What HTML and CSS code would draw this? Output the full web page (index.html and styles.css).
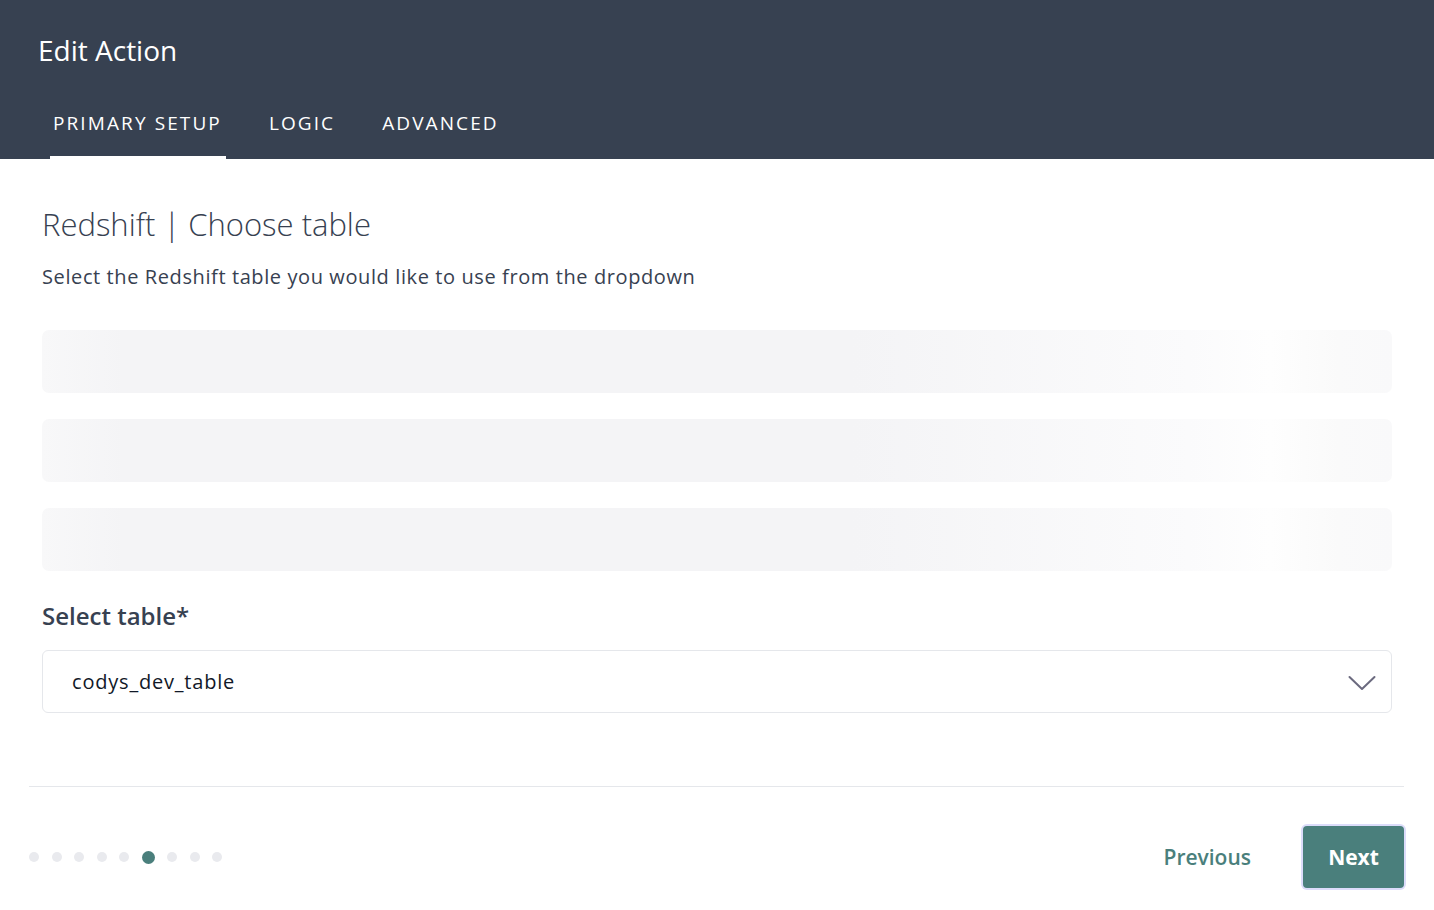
FILE: index.html
```html
<!DOCTYPE html>
<html>
<head>
<meta charset="utf-8">
<link rel="stylesheet" href="styles.css">
</head>
<body>
<div class="page">
  <header class="header">
    <h1 class="title">Edit Action</h1>
    <nav class="tabs">
      <div class="tab active">PRIMARY SETUP</div>
      <div class="tab">LOGIC</div>
      <div class="tab">ADVANCED</div>
    </nav>
  </header>
  <main class="content">
    <h2 class="heading">Redshift | Choose table</h2>
    <p class="sub">Select the Redshift table you would like to use from the dropdown</p>
    <div class="skeletons">
      <div class="skel"></div>
      <div class="skel"></div>
      <div class="skel"></div>
    </div>
    <label class="label">Select table*</label>
    <div class="select">
      <span class="value">codys_dev_table</span>
      <svg class="chev" width="28" height="16" viewBox="0 0 28 16"><path d="M1.5 2 L14 14 L26.5 2" fill="none" stroke="#6b6a7f" stroke-width="2" stroke-linecap="round" stroke-linejoin="round"/></svg>
    </div>
  </main>
  <footer class="footer">
    <div class="dots">
      <span class="dot"></span><span class="dot"></span><span class="dot"></span><span class="dot"></span><span class="dot"></span><span class="dot active"></span><span class="dot"></span><span class="dot"></span><span class="dot"></span>
    </div>
    <div class="actions">
      <button class="prev">Previous</button>
      <button class="next">Next</button>
    </div>
  </footer>
</div>
</body>
</html>
```
FILE: styles.css
```css
* { box-sizing: border-box; }
html, body { margin: 0; padding: 0; background: #fff; }
body { font-family: "Open Sans", "Lato", sans-serif; width: 1434px; height: 910px; overflow: hidden; }
.header { background: #374151; height: 159px; padding: 0 0 0 38px; display: flex; flex-direction: column; }
.title { margin: 0; padding-top: 32px; font-size: 28px; font-weight: 400; color: #fff; line-height: 36px; }
.tabs { display: flex; margin-top: auto; margin-left: 12px; height: 58px; }
.tab { color: #fff; font-size: 19px; letter-spacing: 2.1px; padding: 10px 4px 0 3px; margin-right: 40px; height: 58px; line-height: 24px; }
.tab.active { border-bottom: 3px solid #fff; }
.content { padding: 0 42px; }
.heading { margin: 0; padding-top: 45px; font-size: 31px; font-weight: 300; color: #374151; line-height: 40px; }
.sub { margin: 20px 0 0; font-size: 20px; letter-spacing: 0.6px; color: #374151; line-height: 26px; font-weight: 400; }
.skeletons { margin-top: 40px; display: flex; flex-direction: column; gap: 26px; }
.skel { height: 63px; border-radius: 7px; background: linear-gradient(90deg, #f8f8f9 0%, #f4f4f6 6%, #f4f4f6 60%, #fbfbfc 85%, #fefefe 91%, #fafafa 96%, #f9f9fa 100%); }
.label { display: block; margin-top: 30px; font-size: 24px; font-weight: 600; color: #374151; line-height: 30px; }
.select { margin-top: 19px; height: 63px; border: 1px solid #e5e7eb; border-radius: 6px; display: flex; align-items: center; justify-content: space-between; padding: 0 15px 0 29px; }
.value { font-size: 20px; letter-spacing: 0.8px; color: #111827; }
.chev { margin-top: 2px; }
.footer { margin: 73px 30px 0 29px; border-top: 1px solid #e5e7eb; display: flex; justify-content: space-between; align-items: center; padding-top: 39px; }
.dots { display: flex; align-items: center; gap: 12.5px; }
.dot { width: 10px; height: 10px; border-radius: 50%; background: #e9eaee; }
.dot.active { width: 13px; height: 13px; background: #4a7f7c; }
.actions { display: flex; align-items: center; gap: 52px; }
.prev { background: none; border: none; font-family: inherit; font-size: 21px; font-weight: 600; color: #4a7f7c; padding: 0; }
.next { background: #4a7f7c; border: none; border-radius: 4px; font-family: inherit; font-size: 21px; font-weight: 700; color: #fff; width: 101px; height: 62px; box-shadow: 0 0 0 2px #dcdcfa; }
```
